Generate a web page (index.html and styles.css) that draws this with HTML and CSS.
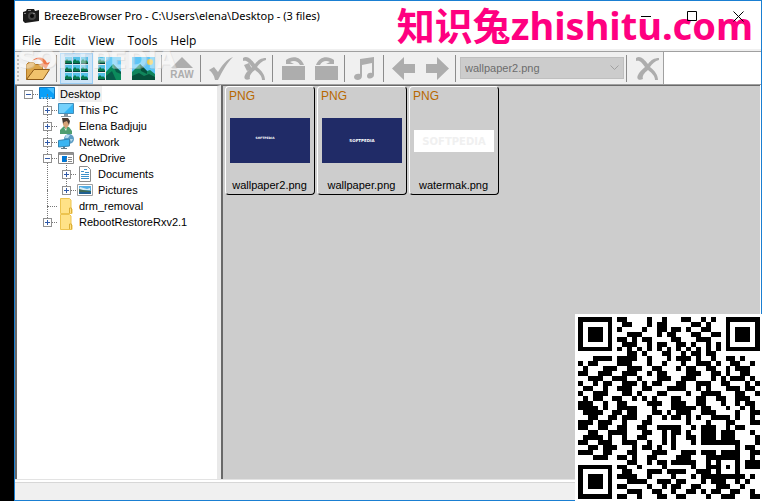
FILE: index.html
```html
<!DOCTYPE html>
<html lang="en">
<head>
<meta charset="utf-8">
<title>BreezeBrowser Pro</title>
<link rel="stylesheet" href="styles.css">
</head>
<body>
<svg class="defs" aria-hidden="true">
  <defs>
    <symbol id="mini" viewBox="0 0 8 8"><path fill="#55c1e8" d="M0 0h7v6H0z"/><path fill="#087b51" d="M0 4l2-2 2 2 1-1 2 2v1H0z"/><path fill="#073f38" d="M0 6h7v1H0z"/></symbol>
    <symbol id="cross" viewBox="0 0 26 26"><path fill="#adadad" d="M2 3c4-3 8 1 12 6 3-4 6-6 11-6v2c-4 1-7 4-9 7 5 4 8 8 8 13h-3c0-4-3-7-7-10-4 3-6 6-5 9-4 2-7 0-5-4 1-3 4-5 7-8C8 8 6 5 2 6z"/></symbol>
    <symbol id="folder" viewBox="0 0 16 16"><path fill="#ffe287" stroke="#edc44f" d="M2.500.5h9L13 2v8l1 1v4.500H2.500z"/><path fill="none" stroke="#dcae35" d="M11.500 15v-5h2v5"/></symbol>
    <symbol id="monitor" viewBox="0 0 16 16"><path fill="#31b4f5" stroke="#458eb9" d="M.5 1.500h15v10H.5z"/><path fill="#75d1fb" d="M1 2h14L6 11H1z"/><path fill="#8797a2" d="M6 12h4v2h3v1H3v-1h3z"/></symbol>
  </defs>
</svg>
<main class="window">
  <header class="titlebar">
    <svg class="camera" viewBox="0 0 16 16"><path fill="#1b1b1b" d="M0 4l3-1 1-2h7l1 2 4-1v11L2 15 0 13z"/><circle cx="9" cy="8" r="4" fill="#454545"/><circle cx="9" cy="8" r="2" fill="#090909"/><path fill="#8a8a8a" d="M5 2h3v1H5zM1 5h2v1H1zM10 5h2v1h-2z"/></svg>
    <h1>BreezeBrowser Pro - C:\Users\elena\Desktop - (3 files)</h1>
    <div class="caption-buttons">
      <button aria-label="Minimize"><svg viewBox="0 0 11 11"><path d="M0 5.500h10"/></svg></button>
      <button aria-label="Maximize"><svg viewBox="0 0 11 11"><path d="M.5.5h9v9h-9z"/></svg></button>
      <button aria-label="Close"><svg viewBox="0 0 11 11"><path d="M.5.5l10 10M10.500.5l-10 10"/></svg></button>
    </div>
  </header>
  <nav class="menu"><button>File</button><button>Edit</button><button>View</button><button>Tools</button><button>Help</button></nav>
  <div class="toolbar-row">
    <div class="toolbar">
      <span class="grip"></span>
      <button aria-label="Open folder"><svg viewBox="0 0 26 26"><path fill="#dca64b" stroke="#b47b27" d="M1.500 24V9.500l2-2h5l2 2h7V14L8 24z"/><path fill="#f0c26c" stroke="#8e5a17" d="M1.500 24.500L9 14.500h15.500L18 24.500z"/><path fill="#ef7548" d="M7 6c4-5 12-5 15 2l3-1-4 7-6-5 3-1C16 4 12 3 7 6z"/></svg></button>
      <span class="sep"></span>
      <button class="selected" aria-label="Thumbnails"><svg viewBox="0 0 26 26"><use href="#mini" x="1" y="2" width="8" height="8"/><use href="#mini" x="9" y="2" width="8" height="8"/><use href="#mini" x="17" y="2" width="8" height="8"/><use href="#mini" x="1" y="10" width="8" height="8"/><use href="#mini" x="9" y="10" width="8" height="8"/><use href="#mini" x="17" y="10" width="8" height="8"/><use href="#mini" x="1" y="18" width="8" height="8"/><use href="#mini" x="9" y="18" width="8" height="8"/><use href="#mini" x="17" y="18" width="8" height="8"/></svg></button>
      <button aria-label="Thumbnails and preview"><svg viewBox="0 0 26 26"><use href="#mini" x="1" y="2" width="8" height="8"/><use href="#mini" x="1" y="10" width="8" height="8"/><use href="#mini" x="1" y="18" width="8" height="8"/><path fill="#67c9f5" d="M9 2h15v23H9z"/><path fill="#0b8b5c" d="M9 17l7-8 8 8v8H9z"/><path fill="#075b49" d="M9 21l6-5 4 9H9zM16 9l3 8 5 2v-2z"/></svg></button>
      <button aria-label="Preview"><svg viewBox="0 0 26 26"><path fill="#5dc5f6" d="M2 2h23v23H2z"/><circle cx="20" cy="7" r="3" fill="#eecb4d"/><path fill="#10855b" d="M2 17l8-8 7 7 3-1 5 4v6H2z"/><path fill="#06513b" d="M2 21l7-3 5 3 5-2 6 3v3H2zM10 9l1 7 6 3v-3z"/></svg></button>
      <span class="sep"></span>
      <button aria-label="Convert RAW"><svg viewBox="0 0 26 26"><path fill="#adadad" d="M13 2l11 11H2z"/><text class="raw" x="13" y="23">RAW</text></svg></button>
      <span class="sep"></span>
      <button aria-label="Tag"><svg viewBox="0 0 26 26"><path fill="#adadad" d="M1 15l5-3 4 5c4-7 9-13 15-15-6 6-10 13-15 23H7C6 20 4 17 1 15z"/></svg></button>
      <button aria-label="Untag"><svg viewBox="0 0 26 26"><use href="#cross"/><path fill="#adadad" d="M3 10l5-2 3 6-5 2z"/></svg></button>
      <span class="sep"></span>
      <button aria-label="Rotate left"><svg viewBox="0 0 26 26"><path fill="#adadad" d="M2 11h23v14H2zM6 2v3c7-5 15-3 18 5h-4c-2-4-6-5-10-3l4 2H6z"/></svg></button>
      <button aria-label="Rotate right"><svg viewBox="0 0 26 26"><path fill="#adadad" d="M2 11h23v14H2zM21 2v3C14 0 6 2 3 10h4c2-4 6-5 10-3l-4 2h8z"/></svg></button>
      <span class="sep"></span>
      <button aria-label="Play sound"><svg viewBox="0 0 26 26"><path fill="#adadad" d="M8 4l14-2v18c0 4-7 5-7 1 0-3 3-4 5-3V8L10 10v11c0 5-8 5-8 1 0-3 4-4 6-3z"/></svg></button>
      <span class="sep"></span>
      <button aria-label="Previous"><svg viewBox="0 0 26 26"><path fill="#adadad" d="M1 13.500L13 2v7h11v9H13v7z"/></svg></button>
      <button aria-label="Next"><svg viewBox="0 0 26 26"><path fill="#adadad" d="M25 13.500L13 2v7H2v9h11v7z"/></svg></button>
      <span class="sep"></span>
      <div class="combo"><select aria-label="Current file" disabled><option>wallpaper2.png</option></select><svg viewBox="0 0 9 6"><path d="M.5.5l4 4 4-4"/></svg></div>
      <span class="sep"></span>
      <button aria-label="Delete"><svg viewBox="0 0 26 26"><use href="#cross"/></svg></button>
    </div>
  </div>
  <div class="workspace">
    <aside class="tree" aria-label="Folders">
      <ul>
        <li><div class="row"><button class="toggle open" aria-label="Collapse"></button><svg viewBox="0 0 16 16"><path fill="#0aa0f8" stroke="#1476bd" d="M.5 1.500h15v11H.5z"/><path fill="#45bfff" d="M8 2h7v6z"/><path stroke="#fff" stroke-dasharray="2 1" d="M2 12h12"/></svg><span class="current">Desktop</span></div>
          <ul>
            <li><div class="row"><button class="toggle" aria-label="Expand"></button><svg><use href="#monitor"/></svg><span>This PC</span></div></li>
            <li><div class="row"><button class="toggle" aria-label="Expand"></button><svg viewBox="0 0 16 16"><path fill="#4f9e70" d="M2 16v-4l4-4 5 1 3 4v3z"/><path fill="#d7a378" d="M5 3h5l1 4-3 4-3-4z"/><path fill="#493b32" d="M4 0h6l2 3-1 4-2-4-3 1-1 2z"/><path fill="#e8f3eb" d="M6 10l2 1 1-1-1 3z"/></svg><span>Elena Badjuju</span></div></li>
            <li><div class="row"><button class="toggle" aria-label="Expand"></button><svg viewBox="0 0 16 16"><circle cx="11" cy="5" r="5" fill="#5d9dc4"/><path fill="#b5dced" d="M8 1l4 0-2 3-3 0zM12 5l3 0-2 3z"/><path fill="#39b5f2" stroke="#3284b1" d="M.5 6.500L11.500 5v7L.5 13z"/><path fill="#607d8c" d="M5 13h2v1h2v1H3v-1h2z"/></svg><span>Network</span></div></li>
            <li><div class="row"><button class="toggle open" aria-label="Collapse"></button><svg viewBox="0 0 16 16"><path fill="#fff" stroke="#888" d="M.5 2.500h15v11H.5z"/><path fill="#929292" d="M1 3h14v2H1z"/><path fill="#0078d7" d="M4 6h5v6H4z"/><path stroke="#888" d="M10 7.500h4M10 9.500h4M10 11.500h4"/></svg><span>OneDrive</span></div>
              <ul>
                <li><div class="row"><button class="toggle" aria-label="Expand"></button><svg viewBox="0 0 16 16"><path fill="#fff" stroke="#8c8c8c" d="M2.500.5h8l3 3v12h-11z"/><path stroke="#3c91cb" d="M7 3.500h3M4 5.500h3M8 6.500h4M4 8.500h8M4 10.500h8M4 12.500h8"/></svg><span>Documents</span></div></li>
                <li><div class="row"><button class="toggle" aria-label="Expand"></button><svg viewBox="0 0 16 16"><path fill="#fff" stroke="#a0a0a0" d="M.5 2.500h15v11H.5z"/><path fill="#55aee5" d="M2 4h12v8H2z"/><path fill="#d9edf5" d="M3 5l7 2 3-1v2H2z"/><path fill="#3e6854" d="M2 7l4 1 8 1v1H2z"/><path fill="#205f91" d="M2 10h12v2H2z"/></svg><span>Pictures</span></div></li>
              </ul>
            </li>
            <li><div class="row"><i class="toggle-space"></i><svg><use href="#folder"/></svg><span>drm_removal</span></div></li>
            <li><div class="row"><button class="toggle" aria-label="Expand"></button><svg><use href="#folder"/></svg><span>RebootRestoreRxv2.1</span></div></li>
          </ul>
        </li>
      </ul>
    </aside>
    <section class="files" aria-label="Files">
      <figure><span class="type">PNG</span><div class="preview"><svg class="blue" viewBox="0 0 80 45"><text class="logo tiny" x="35" y="21">SOFTPEDIA</text></svg></div><figcaption>wallpaper2.png</figcaption></figure>
      <figure><span class="type">PNG</span><div class="preview"><svg class="blue" viewBox="0 0 80 45"><text class="logo small" x="40" y="24">SOFTPEDIA</text></svg></div><figcaption>wallpaper.png</figcaption></figure>
      <figure><span class="type">PNG</span><div class="preview"><svg class="white" viewBox="0 0 80 22"><text class="logo pale" x="40" y="15">SOFTPEDIA</text></svg></div><figcaption>watermak.png</figcaption></figure>
    </section>
  </div>
  <footer class="status"></footer>
  <div class="soft-mark">SOFTPEDIA</div>
</main>
<div class="site-mark">知识兔zhishitu.com</div>
<div class="qr"><svg id="qr" viewBox="0 0 37 37" role="img" aria-label="QR code"></svg></div>
<script src="qr.js"></script>
</body>
</html>
```
FILE: styles.css
```css
* { box-sizing: border-box; }
body { margin: 0; min-height: 100vh; display: flex; padding: 0 0 0 14px; background: #000; color: #000; font: 11px/16px "Liberation Sans", sans-serif; position: relative; }
button { border: 0; padding: 0; background: none; font: inherit; color: inherit; }
svg { display: block; flex: none; }
ul { list-style: none; margin: 0; padding: 0; }
.defs { position: absolute; width: 0; height: 0; }
.window { flex: 1; min-width: 0; display: flex; flex-direction: column; background: #fff; border: 1px solid #1a7fd2; position: relative; }
.titlebar { height: 30px; display: flex; align-items: center; padding-left: 8px; }
.titlebar h1 { font: 11px/16px "Noto Sans", sans-serif; margin: 0 0 0 5px; white-space: nowrap; }
.camera { width: 16px; height: 16px; }
.caption-buttons { display: flex; margin-left: auto; position: relative; z-index: 3; }
.caption-buttons button { width: 46px; height: 28px; display: grid; place-items: center; }
.caption-buttons svg { width: 11px; height: 11px; fill: none; stroke: #000; }
.menu { height: 20px; display: flex; align-items: center; gap: 13px; padding-left: 7px; font: 12px/18px "Open Sans", sans-serif; }
.toolbar-row { border-top: 1px solid #a0a0a0; box-shadow: 0 -2px #f0f0f0; display: flex; height: 34px; border-bottom: 1px solid #a0a0a0; }
.toolbar { display: flex; align-items: center; background: #f0f0f0; border-right: 1px solid #a0a0a0; padding-left: 2px; }
.grip { height: 26px; border-left: 2px dotted #bdbdbd; width: 4px; }
.toolbar button { width: 33px; height: 31px; display: grid; place-items: center; border: 1px solid transparent; }
.toolbar button svg { width: 26px; height: 26px; }
.toolbar .selected { background: #cce4f7; border-color: #99cdf4; }
.sep { width: 6px; height: 27px; border-left: 1px solid #8c8c8c; margin-left: 2px; margin-right: -2px; }
.combo { position: relative; margin-left: 1px; }
.combo select { display: block; appearance: none; width: 164px; height: 22px; border: 1px solid #bfbfbf; background: #ccc; color: #6d6d6d; opacity: 1; font: inherit; padding: 0 4px; border-radius: 0; }
.combo svg { position: absolute; right: 5px; top: 8px; width: 9px; height: 6px; fill: none; stroke: #a0a0a0; }
.raw { font: bold 10px "Liberation Sans", sans-serif; text-anchor: middle; fill: #adadad; }
.workspace { flex: 1; min-height: 0; display: flex; border-bottom: 1px solid #e3e3e3; padding-right: 1px; }
.tree { width: 206px; border-left: 2px solid #696969; border-top: 1px solid #696969; border-right: 4px solid #e9e9e9; }
.tree li { position: relative; }
.tree ul ul { padding-left: 19px; }
.row { height: 16px; display: flex; align-items: center; padding-left: 7px; position: relative; }
.row::before { content: ""; position: absolute; left: 11px; width: 10px; top: 8px; border-top: 1px dotted #777; }
.row svg { width: 16px; height: 16px; margin: 0 3px 0 6px; position: relative; }
.row span { padding: 0 2px; white-space: nowrap; }
.current { background: #f0f0f0; }
.toggle { width: 9px; height: 9px; border: 1px solid #919191; background: linear-gradient(#315aa8, #315aa8) center / 5px 1px no-repeat, linear-gradient(#315aa8, #315aa8) center / 1px 5px no-repeat, #fff; position: relative; z-index: 1; }
.toggle.open { background: linear-gradient(#315aa8, #315aa8) center / 5px 1px no-repeat, #fff; }
.toggle-space { width: 9px; }
.tree ul ul > li::before { content: ""; position: absolute; left: 30px; margin-left: -19px; top: -8px; bottom: 0; border-left: 1px dotted #777; }
.tree ul ul > li:last-child::before { bottom: auto; height: 16px; }
.files { flex: 1; min-width: 0; background: #cdcdcd; border-left: 2px solid #696969; border-top: 1px solid #696969; display: flex; align-items: flex-start; gap: 2px; padding: 0 0 0 2px; }
figure { width: 90px; height: 109px; margin: 0; padding: 1px 4px 0 3px; display: flex; flex-direction: column; border: 1px solid; border-color: #fff #000 #000 #fff; border-radius: 4px; }
.type { color: #b86800; font-size: 12px; }
.preview { height: 73px; display: grid; place-items: center; }
.preview svg { width: 80px; }
.blue { height: 45px; background: #202b67; }
.white { height: 22px; background: #fff; }
.logo { font-family: "DejaVu Sans", sans-serif; font-weight: bold; text-anchor: middle; fill: #fff; }
.tiny { font-size: 3px; }
.small { font-size: 4px; }
.pale { font-size: 10px; fill: #f0f0f0; }
figcaption { text-align: center; white-space: nowrap; }
.status { height: 20px; background: #f0f0f0; border-top: 2px solid #fff; box-shadow: inset 0 1px #d7d7d7; }
.soft-mark { position: absolute; left: 3px; top: 50px; font: bold 25px/18px "DejaVu Sans", sans-serif; color: #fff; opacity: .4; text-shadow: 1px 1px #ccc; pointer-events: none; }
.site-mark { position: absolute; right: 9px; top: 0; font: bold 38px/50px "Noto Sans", "Noto Sans CJK SC", sans-serif; color: #ff0080; white-space: nowrap; z-index: 2; pointer-events: none; }
.qr { position: absolute; right: 0; bottom: 0; width: 187px; height: 187px; padding: 3px 2px 2px 3px; background: #fff; z-index: 2; }
.qr svg { width: 182px; height: 182px; }
```
FILE: qr.js
```javascript
const rows = [
  "1111111011000010010001100101001111111",
  "1000001001100010110000011010001000001",
  "1011101010000100110110100110001011101",
  "1011101000111000101100011001101011101",
  "1011101011010110000110001110001011101",
  "1000001001110010110011010010101000001",
  "1111111010101010101010101010101111111",
  "0000000000110100011001011011000000000",
  "0001111011110010001011101001001101000",
  "1011000011100010010001001110100110010",
  "0100011100111001100010110011001011100",
  "1100111001110010110000111001101001100",
  "0011100111001000111001110001010111010",
  "1001011001110101100011001110011000101",
  "0110010011100110001111001010001110110",
  "1001110001101000110000100111100011001",
  "0101100110010101000110001100110011100",
  "1110010011000011100111001100010010110",
  "1111010011110001000111110110001001010",
  "0111100110110001101011100111000010011",
  "0011001101110010010110101001111010010",
  "1110111001000110000000100010001100011",
  "1100110011001100111110010111001011000",
  "0011001111000110010110100111011100010",
  "0111101001001100010100110111011100001",
  "1100111001110010010100010111111110001",
  "0011011100010110100100000000000010110",
  "1110011000110001110001110111011110011",
  "0001110011010011000011100011111110010",
  "0000000000110010110111110010100010111",
  "1111111011001000010000010011101010111",
  "1000001001100011101111001110100010000",
  "1011101011110010000100010111111111010",
  "1011101000111100111011000101110010100",
  "1011101011000010010110011000111001000",
  "1000001000111001100100110101100110010",
  "1111111011001000110011000010011100011"
];
let d = "";
rows.forEach((row, y) => [...row].forEach((cell, x) => {
  if (cell === "1") d += `M${x} ${y}h1v1h-1z`;
}));
const path = document.createElementNS("http://www.w3.org/2000/svg", "path");
path.setAttribute("d", d);
path.setAttribute("shape-rendering", "crispEdges");
document.getElementById("qr").append(path);
```
